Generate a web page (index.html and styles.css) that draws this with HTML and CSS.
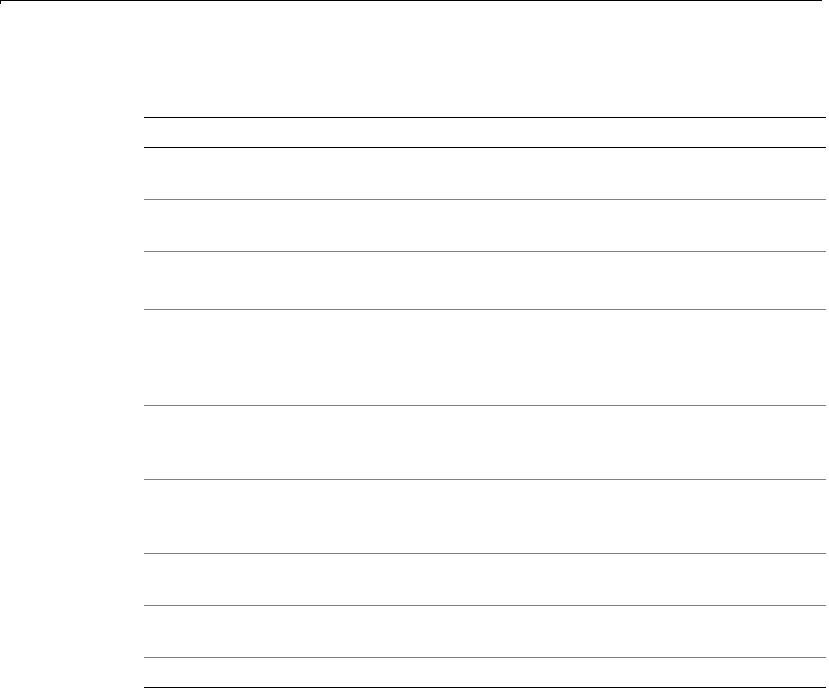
FILE: index.html
```html
<!DOCTYPE html>
<html>
<head>
<meta charset="utf-8">
<link rel="stylesheet" href="styles.css">
</head>
<body>
<div class="page">
  <div class="topbar"></div>
  <div class="table">
    <div class="row head"></div>
    <div class="row r52"></div>
    <div class="row r52"></div>
    <div class="row r58"></div>
    <div class="row r96"></div>
    <div class="row r74"></div>
    <div class="row r74"></div>
    <div class="row r52"></div>
    <div class="row r52"></div>
    <div class="row last"></div>
  </div>
</div>
</body>
</html>
```
FILE: styles.css
```css
html, body {
  margin: 0;
  padding: 0;
  background: #fff;
  font-family: "Liberation Sans", Arial, sans-serif;
}
.page {
  width: 829px;
  height: 688px;
  overflow: hidden;
}
.topbar {
  width: 822px;
  border-top: 1px solid #000;
  border-left: 1px solid #000;
  height: 4px;
  box-sizing: border-box;
}
.table {
  margin: 113px 0 0 144px;
  width: 682px;
  display: flex;
  flex-direction: column;
  border-top: 1px solid #000;
}
.row {
  box-sizing: border-box;
  border-bottom: 1px solid #808080;
}
.head { height: 30px; border-bottom-color: #000; }
.r52 { height: 52px; }
.r58 { height: 58px; }
.r96 { height: 96px; }
.r74 { height: 74px; }
.last { height: 30px; border-bottom-color: #000; }
```
